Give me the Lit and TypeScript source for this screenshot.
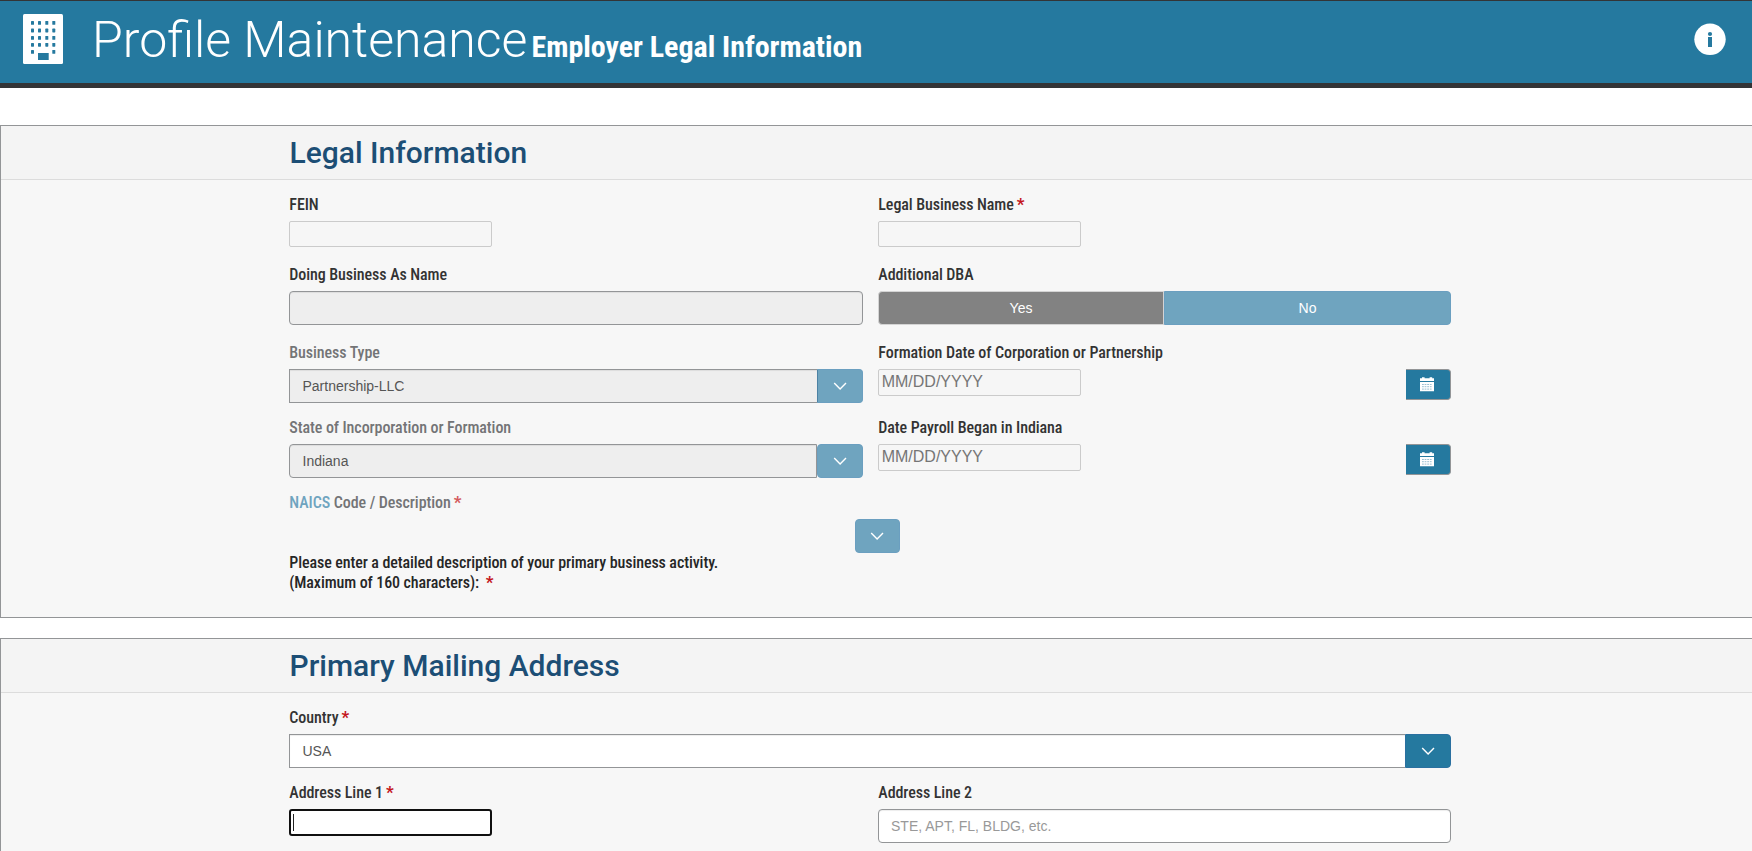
import { LitElement, html, css, svg, nothing } from "lit";
import { customElement, property } from "lit/decorators.js";

const chevron = html`<svg class="chev" width="15" height="10" viewBox="0 0 15 10"><path d="M1.2 1.9 L7.1 8.1 L13 1.9" fill="none" stroke="#fff" stroke-width="1.4"/></svg>`;

const windows = [21, 28.6, 36, 42.9, 50].flatMap((y, r) =>
  [31, 38, 45.3, 52.3]
    .filter((_, c) => r < 4 || c === 0 || c === 3)
    .map((x) => svg`<rect x=${x - 23} y=${y - 14} width="3" height="3.8" rx=".6" fill="#25799f"/>`)
);

const building = html`<svg width="40" height="50" viewBox="0 0 40 50">
  <rect width="40" height="50" rx="1.5" fill="#fff"/>${windows}
  <rect x="15" y="39" width="10.7" height="7" fill="#25799f"/>
</svg>`;

const info = html`<svg width="32" height="32" viewBox="0 0 32 32">
  <circle cx="16" cy="16.3" r="15.7" fill="#fff"/>
  <circle cx="16" cy="11" r="2.1" fill="#25799f"/>
  <rect x="14" y="14" width="4" height="10" fill="#25799f"/>
</svg>`;

const calendar = html`<svg width="14" height="15" viewBox="0 0 14 15">
  <path d="M0 1.3H2V.3H4.6V1.3H9.6V.3H12.2V1.3H14V4H0Z M0 5H14V14.3H0Z" fill="#fff"/>
  ${[7, 9.2, 11.6].map((y) => [2, 4.6, 7.2, 9.8].map((x) => svg`<rect x=${x} y=${y} width="1.8" height="1" fill="#9cc0d2"/>`))}
</svg>`;

@customElement("form-label")
class FormLabel extends LitElement {
  @property({ type: Boolean }) required = false;
  static styles = css`
    :host { display: block; height: 20px; line-height: 20px; margin-bottom: 6px; padding-left: .3px; white-space: nowrap;
      font-family: "Roboto Condensed", Roboto, sans-serif; font-stretch: 75%; font-size: 16px; font-weight: 500; letter-spacing: -.07px; color: #333; }
    .star { color: var(--star, #c4161c); font-weight: 700; font-size: 17px; line-height: 16px; margin-left: 3px; }
  `;
  render() {
    return html`<slot></slot>${this.required ? html`<span class="star">*</span>` : nothing}`;
  }
}

@customElement("form-panel")
class FormPanel extends LitElement {
  @property() heading = "";
  static styles = css`
    :host { display: block; box-sizing: border-box; border: 1px solid #939597; border-right: 0; background: #f7f7f7; }
    header { height: 53px; background: #f4f4f4; border-bottom: 1px solid #dcdcdc; padding-left: 288.5px; }
    h2 { margin: 0; font: 500 30px/54px Roboto, sans-serif; color: #1c4e75; }
    .body { padding: 15px 301px 0 288px; }
  `;
  render() {
    return html`<header><h2>${this.heading}</h2></header><div class="body"><slot></slot></div>`;
  }
}

@customElement("app-root")
class AppRoot extends LitElement {
  static styles = css`
    :host { display: block; height: 851px; overflow: hidden; background: #fff; font-family: "Liberation Sans", Arial, sans-serif; }
    * { box-sizing: border-box; }
    .top { height: 88px; background: #25799f; border-top: 1px solid #333436; border-bottom: 5px solid #333436; display: flex; align-items: flex-start; }
    .top svg { display: block; flex: none; }
    .logo { padding: 13px 0 0 23px; }
    .title { display: flex; align-items: baseline; margin-left: 29px; color: #fff; white-space: nowrap; flex: 1; height: 82px; }
    h1 { margin: 0; font: 300 50px/79px Roboto, sans-serif; }
    .sub { margin-left: 4px; font-family: "Roboto Condensed", Roboto, sans-serif; font-stretch: 75%; font-size: 30px; font-weight: 700; line-height: 40px; letter-spacing: -.02px; }
    .info { padding: 22px 26px 0 0; }
    .first { margin-top: 37px; height: 493px; }
    .second { margin-top: 20px; height: 240px; }
    .row { display: grid; grid-template-columns: 574px 573px; column-gap: 15px; }
    .r1 { height: 70px; } .r2 { height: 78px; } .r3 { height: 75px; }
    .one { grid-template-columns: 1162px; }
    .muted { color: #737476; }
    .muted a { color: #6fa4bf; }
    .fade { --star: #d45a5e; }
    .plain { width: 203px; height: 26px; border: 1px solid #cbcbcb; border-radius: 2px; background: #f6f6f6; }
    .date { height: 27px; font-size: 16px; line-height: 23px; color: #757575; padding-left: 2.7px; }
    .box { height: 34px; border: 1px solid #939597; border-radius: 4px; background: #eee; box-shadow: inset 0 1px 1px rgba(0,0,0,.075);
      font-size: 14px; line-height: 32px; color: #555; padding-left: 12.5px; }
    .white { background: #fff; }
    .hint { color: #999; padding-left: 12px; }
    .select { display: flex; }
    .select .box { flex: 1; border-radius: 0; border-right: 0; }
    .select.rounded .box { border-radius: 4px 0 0 4px; border-right: 1px solid #939597; }
    .btn { width: 46px; height: 34px; background: #6fa4bf; border: 1px solid #6b9fc0; border-left-color: #4c82a4; border-radius: 0 4px 4px 0; display: flex; align-items: center; justify-content: center; }
    .btn svg { display: block; }
    .all { border-radius: 4px; border-left-color: #6b9fc0; }
    .lone { width: 45px; margin-left: 566px; }
    .strong { background: #25799f; border-color: #2a70a0; }
    .toggle { display: flex; height: 34px; color: #fff; font-size: 14px; line-height: 32px; text-align: center; }
    .yes { width: 286px; background: #828282; border: 1px solid #d4d4d4; border-radius: 4px 0 0 4px; }
    .no { flex: 1; background: #6fa4bf; border: 1px solid #6b9fc0; border-radius: 0 4px 4px 0; }
    .daterow { display: flex; justify-content: space-between; align-items: flex-start; }
    .cal { width: 45px; height: 31px; background: #25799f; border: 1px solid #939597; border-left: 0; border-radius: 0 4px 4px 0; display: flex; align-items: center; justify-content: center; padding-right: 2px; }
    .para { height: 40px; margin-bottom: 0; letter-spacing: -.09px; color: #262626; }
    .focus { width: 203px; height: 27px; background: #fff; border: 2px solid #101010; border-radius: 3px; padding: 3px 0 0 2px; }
    .caret { width: 1px; height: 17px; background: #222; }
    .naics { height: 60px; }
  `;

  private date() {
    return html`<div class="daterow"><div class="plain date">MM/DD/YYYY</div><div class="cal">${calendar}</div></div>`;
  }

  render() {
    return html`
      <div class="top">
        <div class="logo">${building}</div>
        <div class="title"><h1>Profile Maintenance</h1><span class="sub">Employer Legal Information</span></div>
        <div class="info">${info}</div>
      </div>
      <form-panel class="first" heading="Legal Information">
        <div class="row r1">
          <div><form-label>FEIN</form-label><div class="plain"></div></div>
          <div><form-label required>Legal Business Name</form-label><div class="plain"></div></div>
        </div>
        <div class="row r2">
          <div><form-label>Doing Business As Name</form-label><div class="box"></div></div>
          <div><form-label>Additional DBA</form-label>
            <div class="toggle"><div class="yes">Yes</div><div class="no">No</div></div></div>
        </div>
        <div class="row r3">
          <div><form-label class="muted">Business Type</form-label>
            <div class="select"><div class="box">Partnership-LLC</div><div class="btn">${chevron}</div></div></div>
          <div><form-label>Formation Date of Corporation or Partnership</form-label>${this.date()}</div>
        </div>
        <div class="row r3">
          <div><form-label class="muted">State of Incorporation or Formation</form-label>
            <div class="select rounded"><div class="box">Indiana</div><div class="btn all">${chevron}</div></div></div>
          <div><form-label>Date Payroll Began in Indiana</form-label>${this.date()}</div>
        </div>
        <div class="naics">
          <form-label class="muted fade" required><a>NAICS</a> Code / Description</form-label>
          <div class="row one"><div class="btn all lone">${chevron}</div></div>
        </div>
        <form-label class="para" required>Please enter a detailed description of your primary business activity.<br>(Maximum of 160 characters):&nbsp;</form-label>
      </form-panel>
      <form-panel class="second" heading="Primary Mailing Address">
        <div class="row one r3">
          <div><form-label required>Country</form-label>
            <div class="select"><div class="box white">USA</div><div class="btn strong">${chevron}</div></div></div>
        </div>
        <div class="row">
          <div><form-label required>Address Line 1</form-label><div class="focus"><div class="caret"></div></div></div>
          <div><form-label>Address Line 2</form-label><div class="box white hint">STE, APT, FL, BLDG, etc.</div></div>
        </div>
      </form-panel>
    `;
  }
}
